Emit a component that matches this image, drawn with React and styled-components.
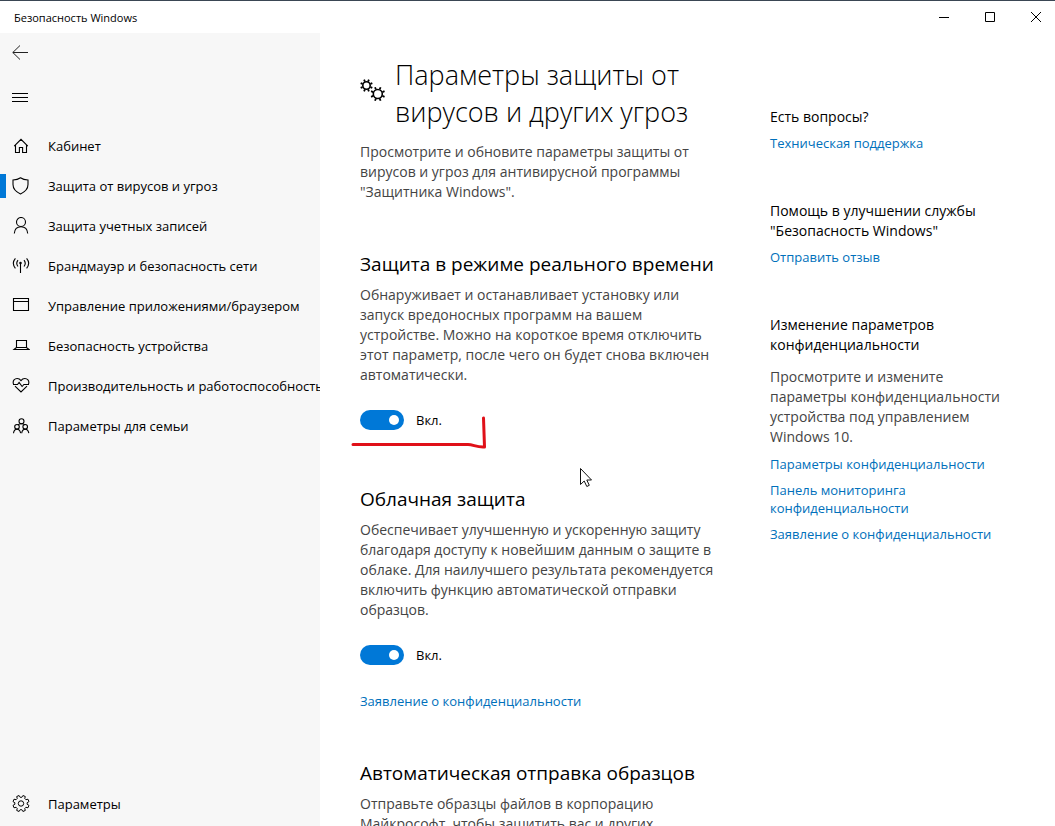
import React from "react";
import styled, { createGlobalStyle } from "styled-components";

const GlobalStyle = createGlobalStyle`
  * {
    box-sizing: border-box;
  }

  body {
    margin: 0;
    background-color: #fff;
    color: #000;
    font-family: "Open Sans", "Noto Sans", sans-serif;
    font-size: 14px;
    overflow: hidden;
  }

  h1, h2, h3, p {
    margin: 0;
    font-weight: 400;
  }

  button {
    padding: 0;
    border: 0;
    background: none;
    color: inherit;
    font: inherit;
  }
`;

const Window = styled.div`
  height: 100vh;
  display: flex;
  flex-direction: column;
  border-top: 1px solid #3a4654;
`;

const TitleBar = styled.header`
  height: 32px;
  flex: none;
  display: flex;
  align-items: center;
  justify-content: space-between;
  padding-left: 14px;
  font-size: 11px;
`;

const WindowButtons = styled.div`
  display: flex;
  height: 100%;
  margin-right: -4px;
`;

const WindowButton = styled.button`
  width: 46px;
  display: flex;
  align-items: center;
  justify-content: center;
`;

const Body = styled.div`
  flex: 1;
  min-height: 0;
  display: flex;
`;

const Sidebar = styled.nav`
  width: 320px;
  flex: none;
  display: flex;
  flex-direction: column;
  padding-bottom: 2px;
  background-color: #f7f7f7;
  overflow: hidden;
`;

const IconButton = styled.button`
  width: 40px;
  height: 40px;
  display: flex;
  align-items: center;
  justify-content: center;
`;

const MenuButton = styled(IconButton)`
  margin: 5px 0 8px;
`;

const NavItem = styled.a`
  height: 40px;
  flex: none;
  display: flex;
  align-items: center;
  gap: 18px;
  padding-left: ${({ $active }) => ($active ? "6px" : "12px")};
  color: #000;
  font-size: 13px;
  text-decoration: none;
  white-space: nowrap;

  &::before {
    content: "";
    display: ${({ $active }) => ($active ? "block" : "none")};
    width: 6px;
    height: 24px;
    margin: 0 -12px 0 -6px;
    background-color: #0078d7;
  }

  svg {
    flex: none;
  }
`;

const Spacer = styled.div`
  flex: 1;
`;

const Content = styled.main`
  flex: 1;
  min-width: 0;
  display: flex;
  align-items: flex-start;
  gap: 50px;
  padding: 23px 40px 0;
  overflow: hidden;
`;

const Settings = styled.div`
  width: 360px;
  flex: none;
`;

const PageHeader = styled.div`
  display: flex;
  gap: 9px;
  margin-bottom: 12px;

  svg {
    flex: none;
    margin-top: 22px;
  }
`;

const PageTitle = styled.h1`
  font-size: 27px;
  font-weight: 300;
  line-height: 37px;
`;

const Text = styled.p`
  color: #444;
  font-size: 14px;
  line-height: 20px;
`;

const Section = styled.section`
  position: relative;
  margin-top: ${({ $gap }) => $gap}px;
`;

const SectionTitle = styled.h2`
  margin-bottom: 7px;
  font-size: 19px;
  line-height: 28px;
  white-space: nowrap;
`;

const ToggleRow = styled.label`
  display: flex;
  align-items: center;
  gap: 12px;
  margin-top: 25px;
  font-size: 13px;
  line-height: 20px;
`;

const Switch = styled.input`
  appearance: none;
  width: 44px;
  height: 20px;
  margin: 0;
  display: flex;
  align-items: center;
  justify-content: flex-end;
  padding: 0 5px;
  border-radius: 10px;
  background-color: #0078d7;

  &::before {
    content: "";
    width: 10px;
    height: 10px;
    border-radius: 50%;
    background-color: #fff;
  }

  &:not(:checked) {
    justify-content: flex-start;
    background-color: #999;
  }
`;

const TextLink = styled.a`
  display: block;
  margin-top: 8px;
  color: #0070bb;
  font-size: 13px;
  line-height: 18px;
  text-decoration: none;
`;

const SectionLink = styled(TextLink)`
  margin-top: 27px;
`;

const Aside = styled.aside`
  flex: 1;
  min-width: 0;
  max-width: 240px;
  padding-top: 51px;
`;

const AsideBlock = styled.section`
  margin-bottom: 49px;

  h3 + a {
    margin-top: 7px;
  }

  p {
    margin-top: 12px;
  }
`;

const AsideTitle = styled.h3`
  font-size: 14px;
  line-height: 20px;
`;

const Marker = styled.svg`
  position: absolute;
  left: -10px;
  top: 164px;
`;

const Cursor = styled.svg`
  position: absolute;
  left: 219px;
  top: 217px;
`;

const Icon = ({ children, size = 18, width = 1.1 }) => (
  <svg
    width={size}
    height={size}
    viewBox="0 0 18 18"
    fill="none"
    stroke="#000"
    strokeWidth={width}
    aria-hidden="true"
  >
    {children}
  </svg>
);

// outline of a cog with wide teeth
const cogPath = (cx, cy, outer, inner, teeth) => {
  const step = (Math.PI * 2) / teeth;
  const points = [];
  for (let i = 0; i < teeth; i++) {
    [
      [-0.34, inner],
      [-0.2, outer],
      [0.2, outer],
      [0.34, inner],
    ].forEach(([offset, r]) => {
      const a = (i + 0.5 + offset) * step;
      points.push(
        `${(cx + r * Math.cos(a)).toFixed(2)} ${(cy + r * Math.sin(a)).toFixed(2)}`
      );
    });
  }
  return `M${points.join("L")}Z`;
};

// short spokes around a ring
const spokes = (cx, cy, from, to) =>
  Array.from({ length: 8 }, (_, i) => {
    const a = ((i + 0.5) * Math.PI) / 4;
    const x = Math.cos(a);
    const y = Math.sin(a);
    return `M${cx + x * from} ${cy + y * from}L${cx + x * to} ${cy + y * to}`;
  }).join("");

const GearsIcon = () => (
  <svg width="26" height="24" viewBox="0 0 26 24" fill="none" stroke="#000" aria-hidden="true">
    <circle cx="6.5" cy="7.5" r="3.7" strokeWidth="1.6" />
    <path d={spokes(6.5, 7.5, 4.2, 6.3)} strokeWidth="1.8" />
    <circle cx="17.8" cy="16" r="4.5" strokeWidth="1.6" />
    <path d={spokes(17.8, 16, 5, 7.3)} strokeWidth="1.8" />
  </svg>
);

const navItems = [
  {
    label: "Кабинет",
    icon: <path d="M2.2 9.2L9 2.3l6.8 6.9M3.5 8v7.5h3.9v-5h3.2v5h3.9V8" />,
  },
  {
    label: "Защита от вирусов и угроз",
    active: true,
    icon: <path d="M8.500.8c2 1.400 4.500 2.100 7.500 2.200v4.500c0 4.200-2.800 7.300-7.500 9.400C3.800 14.800 1 11.700 1 7.500V3C4 2.900 6.500 2.200 8.500.8z" />,
  },
  {
    label: "Защита учетных записей",
    icon: (
      <>
        <circle cx="9" cy="5" r="4.500" />
        <path d="M2.300 16.500c.3-4.200 3-6.800 6.700-6.800s6.400 2.600 6.700 6.800" />
      </>
    ),
  },
  {
    label: "Брандмауэр и безопасность сети",
    icon: (
      <>
        <path d="M3.400 1.300c-2.500 3-2.500 7 0 10M14.600 1.300c2.500 3 2.500 7 0 10M6 3.200c-1.600 2-1.600 4.300 0 6.300M12 3.200c1.600 2 1.600 4.300 0 6.300M8.500 6.500V16" />
        <circle cx="8.500" cy="6" r=".7" fill="#000" />
      </>
    ),
  },
  {
    label: "Управление приложениями/браузером",
    icon: <path d="M1.500 1.500h15v12h-15zM1.500 4.500h15" />,
  },
  {
    label: "Безопасность устройства",
    icon: <path d="M4.500 10.500v-7h10v7M4.500 10.500L2 12.500h15l-2.500-2zM2 12.500h15" />,
  },
  {
    label: "Производительность и работоспособность",
    icon: (
      <path d="M1.500 7C.2 3.200 3 1.500 5.200 1.500 7 1.500 8.200 2.500 9 3.600c.8-1.100 2-2.100 3.800-2.100 2.200 0 5 1.700 3.700 5.500M1 7.500h4.500l1.600-2 3 4 1.800-2H17M3 9.200l6 5.800 6-5.800" />
    ),
  },
  {
    label: "Параметры для семьи",
    icon: (
      <>
        <circle cx="9.500" cy="4.200" r="2.500" />
        <circle cx="5" cy="9.800" r="2.300" />
        <circle cx="13.200" cy="9.800" r="2.300" />
        <path d="M1.500 16.200c.3-2.600 1.600-4 3.500-4s3.200 1.400 3.600 4M9.700 16.200c.3-2.600 1.600-4 3.500-4s3.200 1.400 3.600 4M6 7.800c.8-.8 2-1.100 3.500-1.100s2.600.3 3.300 1.100" />
      </>
    ),
  },
];

const Toggle = ({ id }) => (
  <ToggleRow htmlFor={id}>
    <Switch type="checkbox" id={id} defaultChecked />
    Вкл.
  </ToggleRow>
);

const App = () => {
  return (
    <Window>
      <GlobalStyle />
      <TitleBar>
        <span>Безопасность Windows</span>
        <WindowButtons>
          <WindowButton aria-label="Свернуть">
            <svg width="10" height="10" stroke="#000">
              <path d="M0 5.500h10" />
            </svg>
          </WindowButton>
          <WindowButton aria-label="Развернуть">
            <svg width="10" height="10" fill="none" stroke="#000">
              <path d="M.5.5h9v9h-9z" />
            </svg>
          </WindowButton>
          <WindowButton aria-label="Закрыть">
            <svg width="10" height="10" stroke="#000">
              <path d="M0 0l10 10M10 0L0 10" />
            </svg>
          </WindowButton>
        </WindowButtons>
      </TitleBar>
      <Body>
        <Sidebar>
          <IconButton aria-label="Назад">
            <svg width="16" height="16" fill="none" stroke="#222">
              <path d="M16 7.500H.8M8 .5L.8 7.500 8 14.500" />
            </svg>
          </IconButton>
          <MenuButton aria-label="Меню">
            <svg width="16" height="10" stroke="#000">
              <path d="M0 .5h16M0 4.500h16M0 8.500h16" />
            </svg>
          </MenuButton>
          {navItems.map(({ label, icon, active }) => (
            <NavItem href="#" key={label} $active={active}>
              <Icon>{icon}</Icon>
              {label}
            </NavItem>
          ))}
          <Spacer />
          <NavItem href="#">
            <Icon width={1}>
              <path d={cogPath(9, 8.5, 8.2, 6.2, 8)} />
              <circle cx="9" cy="8.500" r="2.700" />
            </Icon>
            Параметры
          </NavItem>
        </Sidebar>
        <Content>
          <Settings>
            <PageHeader>
              <GearsIcon />
              <PageTitle>Параметры защиты от вирусов и других угроз</PageTitle>
            </PageHeader>
            <Text>
              Просмотрите и обновите параметры защиты от вирусов и угроз для
              антивирусной программы "Защитника Windows".
            </Text>
            <Section $gap={48}>
              <SectionTitle>Защита в режиме реального времени</SectionTitle>
              <Text>
                Обнаруживает и останавливает установку или запуск вредоносных
                программ на вашем устройстве. Можно на короткое время отключить
                этот параметр, после чего он будет снова включен автоматически.
              </Text>
              <Toggle id="realtime" />
              <Marker width="140" height="36" fill="none" stroke="#e01018" strokeWidth="3" strokeLinecap="round" aria-hidden="true">
                <path d="M3 30.500h115c5 0 8 2.500 15 2.500M133.500 4l1 29" />
              </Marker>
              <Cursor width="14" height="22" fill="#fff" stroke="#111" aria-hidden="true">
                <path d="M1.500 1.500v16l3.700-3.500 2.600 5.500 2.500-1.200-2.500-5.300h4.700z" />
              </Cursor>
            </Section>
            <Section $gap={55}>
              <SectionTitle>Облачная защита</SectionTitle>
              <Text>
                Обеспечивает улучшенную и ускоренную защиту благодаря доступу к
                новейшим данным о защите в облаке. Для наилучшего результата
                рекомендуется включить функцию автоматической отправки образцов.
              </Text>
              <Toggle id="cloud" />
              <SectionLink href="#">Заявление о конфиденциальности</SectionLink>
            </Section>
            <Section $gap={49}>
              <SectionTitle>Автоматическая отправка образцов</SectionTitle>
              <Text>
                Отправьте образцы файлов в корпорацию Майкрософт, чтобы защитить
                вас и других
              </Text>
            </Section>
          </Settings>
          <Aside>
            <AsideBlock>
              <AsideTitle>Есть вопросы?</AsideTitle>
              <TextLink href="#">Техническая поддержка</TextLink>
            </AsideBlock>
            <AsideBlock>
              <AsideTitle>Помощь в улучшении службы "Безопасность Windows"</AsideTitle>
              <TextLink href="#">Отправить отзыв</TextLink>
            </AsideBlock>
            <AsideBlock>
              <AsideTitle>Изменение параметров конфиденциальности</AsideTitle>
              <Text>
                Просмотрите и измените параметры конфиденциальности устройства
                под управлением Windows 10.
              </Text>
              <TextLink href="#">Параметры конфиденциальности</TextLink>
              <TextLink href="#">Панель мониторинга конфиденциальности</TextLink>
              <TextLink href="#">Заявление о конфиденциальности</TextLink>
            </AsideBlock>
          </Aside>
        </Content>
      </Body>
    </Window>
  );
};

export default App;
